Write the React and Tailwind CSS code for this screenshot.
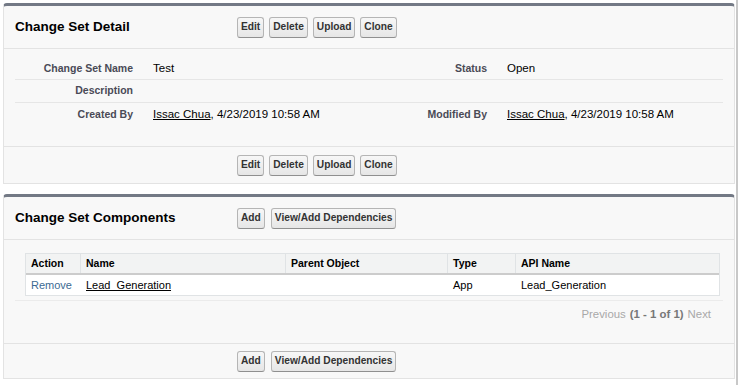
import React from 'react';

const Btn = ({ children }) => (
  <button className="h-[21px] px-[3px] rounded-[3px] border border-[#b5b5b5] border-b-[#8f8f8f] bg-gradient-to-b from-[#f7f7f7] to-[#e6e6e6] text-[10.2px] font-bold text-[#333] leading-none">
    {children}
  </button>
);

const DetailRow = ({ label, value, label2, value2, h, last }) => (
  <div className={`flex items-center text-[11.5px] ${h} ${last ? '' : 'border-b border-[#e6e6e6]'}`}>
    <div className="w-[118px] text-right text-[10.5px] font-bold text-[#4a4a56]">{label}</div>
    <div className="w-[247px] ml-[20px] text-black">{value}</div>
    <div className="w-[87px] text-right text-[10.5px] font-bold text-[#4a4a56]">{label2}</div>
    <div className="ml-[20px] text-black">{value2}</div>
  </div>
);

const Person = () => (
  <span>
    <span className="underline">Issac Chua</span>, 4/23/2019 10:58 AM
  </span>
);

const cols = 'grid grid-cols-[54px_205px_162px_68px_1fr]';

const App = () => {
  return (
    <div className="w-[739px] h-[385px] bg-white flex font-['Liberation_Sans',Arial,sans-serif] overflow-hidden">
      <div className="w-[736px] pl-[3px] pr-[1px] pt-[3px] flex flex-col gap-[10px]">
        {/* Change Set Detail */}
        <div className="bg-[#f8f8f8] border border-[#e3e3e3] border-t-[3px] border-t-[#737985] rounded-t-[4px]">
          <div className="h-[43px] flex items-center px-[11px] border-b border-[#e3e3e3]">
            <h2 className="w-[222px] text-[13.5px] font-bold text-black">Change Set Detail</h2>
            <div className="flex gap-[5px]">
              <Btn>Edit</Btn>
              <Btn>Delete</Btn>
              <Btn>Upload</Btn>
              <Btn>Clone</Btn>
            </div>
          </div>
          <div className="px-[11px] pt-[8px] pb-[19px]">
            <DetailRow h="h-[23px] pt-[1px]" label="Change Set Name" value="Test" label2="Status" value2="Open" />
            <DetailRow h="h-[23px]" label="Description" value="" label2="" value2="" />
            <DetailRow h="h-[24px]" label="Created By" value={<Person />} label2="Modified By" value2={<Person />} last />
          </div>
          <div className="border-t border-[#e3e3e3] pt-[8px] pb-[7px] pl-[233px] flex gap-[5px]">
            <Btn>Edit</Btn>
            <Btn>Delete</Btn>
            <Btn>Upload</Btn>
            <Btn>Clone</Btn>
          </div>
        </div>

        {/* Change Set Components */}
        <div className="bg-[#f8f8f8] border border-[#e3e3e3] border-t-[3px] border-t-[#737985] rounded-t-[4px]">
          <div className="h-[43px] flex items-center px-[11px] border-b border-[#e3e3e3]">
            <h2 className="w-[222px] text-[13.5px] font-bold text-black">Change Set Components</h2>
            <div className="flex gap-[6px]">
              <Btn>Add</Btn>
              <Btn>View/Add Dependencies</Btn>
            </div>
          </div>
          <div className="px-[11px] pt-[13px]">
            <div className="border-b border-[#ebebeb] pb-[4px]">
              <div className="w-[695px] ml-[10px] border border-[#e0e3e5] bg-white">
                <div className={`${cols} h-[21px] bg-[#f2f3f3] border-b-2 border-[#cccccc] text-[10.5px] font-bold text-black`}>
                  {['Action', 'Name', 'Parent Object', 'Type', 'API Name'].map((h, i) => (
                    <div key={h} className={`flex items-center pl-[5px] ${i > 0 ? 'border-l border-[#e0e3e5]' : ''}`}>{h}</div>
                  ))}
                </div>
                <div className={`${cols} h-[20px] items-center text-[11px] text-black`}>
                  <div className="pl-[5px] text-[#3b6a93]">Remove</div>
                  <div className="pl-[6px] underline">Lead_Generation</div>
                  <div className="pl-[6px]"></div>
                  <div className="pl-[6px]">App</div>
                  <div className="pl-[6px]">Lead_Generation</div>
                </div>
              </div>
            </div>
            <div className="h-[42px] flex items-start justify-end pr-[12px] pt-[5px] text-[11.4px]">
              <span className="text-[#a8a8a8]">Previous</span>
              <span className="ml-[4px] font-bold text-[#777]">(1 - 1 of 1)</span>
              <span className="ml-[4px] text-[#a8a8a8]">Next</span>
            </div>
          </div>
          <div className="border-t border-[#e3e3e3] pt-[7px] pb-[6px] pl-[233px] flex gap-[6px]">
            <Btn>Add</Btn>
            <Btn>View/Add Dependencies</Btn>
          </div>
        </div>
      </div>
      <div className="w-[2px] h-full bg-[#c8c8c8]"></div>
    </div>
  );
};

export default App;
